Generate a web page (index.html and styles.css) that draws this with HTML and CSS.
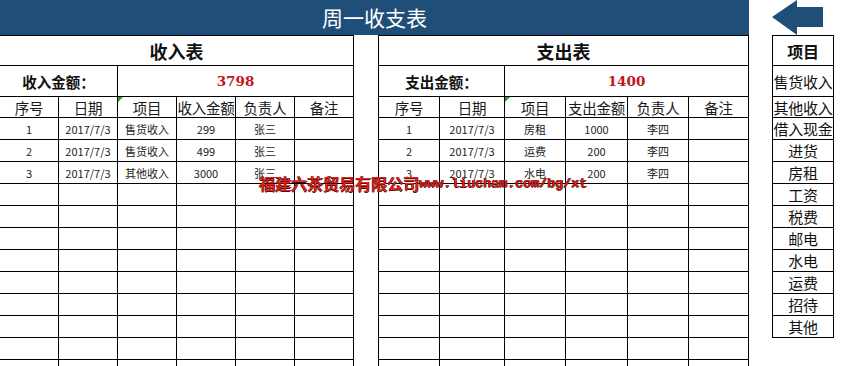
FILE: index.html
```html
<!DOCTYPE html>
<html lang="zh-CN">
<head>
<meta charset="utf-8">
<title>周一收支表</title>
<link rel="stylesheet" href="styles.css">
</head>
<body>
<div class="page">
  <div class="main">
    <div class="banner">周一收支表</div>
    <div class="tables">
      <div class="sheet income">
        <div class="cell title span6">收入表</div>
        <div class="cell label span2">收入金额：</div>
        <div class="cell amount span4">3798</div>
        <div class="cell head">序号</div>
        <div class="cell head">日期</div>
        <div class="cell head mark">项目</div>
        <div class="cell head">收入金额</div>
        <div class="cell head">负责人</div>
        <div class="cell head">备注</div>
        <div class="cell">1</div><div class="cell">2017/7/3</div><div class="cell">售货收入</div><div class="cell">299</div><div class="cell">张三</div><div class="cell"></div>
        <div class="cell">2</div><div class="cell">2017/7/3</div><div class="cell">售货收入</div><div class="cell">499</div><div class="cell">张三</div><div class="cell"></div>
        <div class="cell">3</div><div class="cell">2017/7/3</div><div class="cell">其他收入</div><div class="cell">3000</div><div class="cell">张三</div><div class="cell"></div>
        <div class="cell"></div><div class="cell"></div><div class="cell"></div><div class="cell"></div><div class="cell"></div><div class="cell"></div>
        <div class="cell"></div><div class="cell"></div><div class="cell"></div><div class="cell"></div><div class="cell"></div><div class="cell"></div>
        <div class="cell"></div><div class="cell"></div><div class="cell"></div><div class="cell"></div><div class="cell"></div><div class="cell"></div>
        <div class="cell"></div><div class="cell"></div><div class="cell"></div><div class="cell"></div><div class="cell"></div><div class="cell"></div>
        <div class="cell"></div><div class="cell"></div><div class="cell"></div><div class="cell"></div><div class="cell"></div><div class="cell"></div>
        <div class="cell"></div><div class="cell"></div><div class="cell"></div><div class="cell"></div><div class="cell"></div><div class="cell"></div>
        <div class="cell"></div><div class="cell"></div><div class="cell"></div><div class="cell"></div><div class="cell"></div><div class="cell"></div>
        <div class="cell"></div><div class="cell"></div><div class="cell"></div><div class="cell"></div><div class="cell"></div><div class="cell"></div>
        <div class="cell"></div><div class="cell"></div><div class="cell"></div><div class="cell"></div><div class="cell"></div><div class="cell"></div>
      </div>
      <div class="sheet expense">
        <div class="cell title span6">支出表</div>
        <div class="cell label span2">支出金额：</div>
        <div class="cell amount span4">1400</div>
        <div class="cell head">序号</div>
        <div class="cell head">日期</div>
        <div class="cell head mark">项目</div>
        <div class="cell head">支出金额</div>
        <div class="cell head">负责人</div>
        <div class="cell head">备注</div>
        <div class="cell">1</div><div class="cell">2017/7/3</div><div class="cell">房租</div><div class="cell">1000</div><div class="cell">李四</div><div class="cell"></div>
        <div class="cell">2</div><div class="cell">2017/7/3</div><div class="cell">运费</div><div class="cell">200</div><div class="cell">李四</div><div class="cell"></div>
        <div class="cell">3</div><div class="cell">2017/7/3</div><div class="cell">水电</div><div class="cell">200</div><div class="cell">李四</div><div class="cell"></div>
        <div class="cell"></div><div class="cell"></div><div class="cell"></div><div class="cell"></div><div class="cell"></div><div class="cell"></div>
        <div class="cell"></div><div class="cell"></div><div class="cell"></div><div class="cell"></div><div class="cell"></div><div class="cell"></div>
        <div class="cell"></div><div class="cell"></div><div class="cell"></div><div class="cell"></div><div class="cell"></div><div class="cell"></div>
        <div class="cell"></div><div class="cell"></div><div class="cell"></div><div class="cell"></div><div class="cell"></div><div class="cell"></div>
        <div class="cell"></div><div class="cell"></div><div class="cell"></div><div class="cell"></div><div class="cell"></div><div class="cell"></div>
        <div class="cell"></div><div class="cell"></div><div class="cell"></div><div class="cell"></div><div class="cell"></div><div class="cell"></div>
        <div class="cell"></div><div class="cell"></div><div class="cell"></div><div class="cell"></div><div class="cell"></div><div class="cell"></div>
        <div class="cell"></div><div class="cell"></div><div class="cell"></div><div class="cell"></div><div class="cell"></div><div class="cell"></div>
        <div class="cell"></div><div class="cell"></div><div class="cell"></div><div class="cell"></div><div class="cell"></div><div class="cell"></div>
      </div>
    </div>
  </div>
  <div class="side">
    <svg class="arrow" width="62" height="35" viewBox="0 0 62 35" aria-hidden="true">
      <polygon points="0,17 25,0 25,7 51,7 51,27 25,27 25,35" fill="#1f4e79"/>
    </svg>
    <div class="items">
      <div class="item top">项目</div>
      <div class="item big">售货收入</div>
      <div class="item">其他收入</div>
      <div class="item">借入现金</div>
      <div class="item">进货</div>
      <div class="item">房租</div>
      <div class="item">工资</div>
      <div class="item">税费</div>
      <div class="item">邮电</div>
      <div class="item">水电</div>
      <div class="item">运费</div>
      <div class="item">招待</div>
      <div class="item">其他</div>
    </div>
  </div>
  <div class="watermark"><span class="wm-cn">福建六茶贸易有限公司</span><span class="wm-url">www.liucham.com/bg/xt</span></div>
</div>
</body>
</html>
```

FILE: styles.css
```css
html, body {
  margin: 0;
  padding: 0;
  background: #ffffff;
  overflow: hidden;
}

body {
  font-family: "Noto Sans CJK SC", "Noto Sans", sans-serif;
  color: #111;
}

.page {
  position: relative;
  display: flex;
  align-items: flex-start;
  width: 846px;
  height: 366px;
  overflow: hidden;
}

.main {
  width: 749px;
  display: flex;
  flex-direction: column;
}

.banner {
  height: 35px;
  background: #1f4e79;
  color: #ffffff;
  font-size: 21px;
  line-height: 35px;
  text-align: center;
}

.tables {
  display: flex;
  gap: 24px;
  margin-left: -1px;
}

.sheet {
  display: grid;
  gap: 1px;
  padding: 1px;
  background: #000;
  grid-template-rows: 29px 30px 20px;
  grid-auto-rows: 21px;
}

.income {
  grid-template-columns: repeat(6, 58px);
}

.expense {
  grid-template-columns: 60px 64px 60px 61px 60px 59px;
}

.cell {
  background: #fff;
  display: flex;
  align-items: center;
  justify-content: center;
  font-size: 11px;
  color: #222;
  white-space: nowrap;
  overflow: hidden;
}

.span6 { grid-column: span 6; }
.span4 { grid-column: span 4; }
.span2 { grid-column: span 2; }

.title {
  font-size: 18px;
  font-weight: 700;
  color: #111;
}

.label {
  font-size: 14.5px;
  font-weight: 700;
  color: #111;
}

.amount {
  font-family: "DejaVu Serif", "Liberation Serif", serif;
  font-size: 13.5px;
  font-weight: 700;
  color: #c0161c;
}

.head {
  font-size: 14.5px;
  color: #1a1a1a;
  letter-spacing: -0.2px;
}

.mark {
  position: relative;
}

.mark::before {
  content: "";
  position: absolute;
  left: 0;
  top: 0;
  border-top: 5px solid #2e9a3a;
  border-right: 5px solid transparent;
}

.side {
  margin-left: 23px;
  width: 62px;
  display: flex;
  flex-direction: column;
}

.arrow {
  display: block;
}

.items {
  display: grid;
  gap: 1px;
  padding: 1px;
  background: #000;
  grid-template-columns: 60px;
  grid-template-rows: 29px 30px 20px;
  grid-auto-rows: 21px;
}

.item {
  background: #fff;
  display: flex;
  align-items: center;
  justify-content: center;
  font-size: 15px;
  color: #111;
  white-space: nowrap;
  letter-spacing: -0.3px;
}

.item.top {
  font-size: 16px;
  font-weight: 700;
}

.watermark {
  position: absolute;
  left: 259px;
  top: 175px;
  height: 17px;
  display: flex;
  align-items: center;
  color: #e8261e;
  white-space: nowrap;
  text-shadow: 1px 0 #5a0a0a, 0 1px #5a0a0a, -0.5px 0 #7a1010, 0 -0.5px #7a1010;
}

.wm-cn {
  font-size: 16px;
  line-height: 17px;
}

.wm-url {
  font-family: "Liberation Mono", monospace;
  font-size: 13.33px;
  line-height: 17px;
}
```
